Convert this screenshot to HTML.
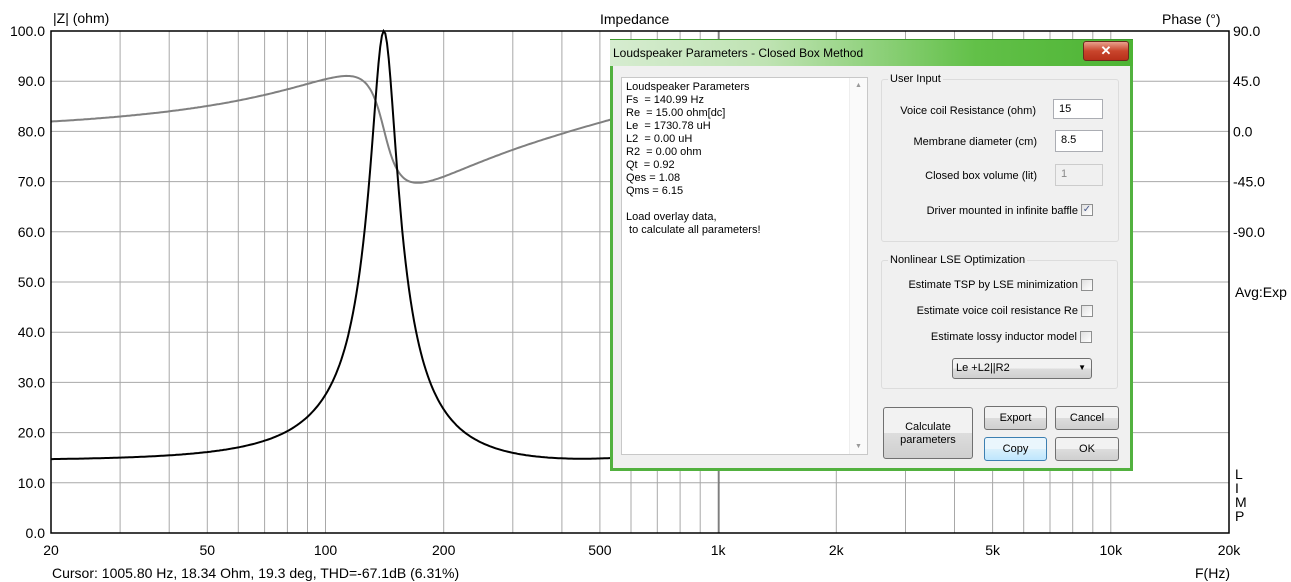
<!DOCTYPE html>
<html><head><meta charset="utf-8"><style>
body{margin:0;width:1291px;height:582px;background:#fff;position:relative;overflow:hidden;font-family:"Liberation Sans",Arial,sans-serif}
.t{position:absolute;font-size:14px;color:#000;white-space:nowrap;line-height:16px}
.dlg{position:absolute;left:610px;top:39px;width:517px;height:429px;border:3px solid #52b13f;border-top:none;background:#f0f0f0;font-size:11px}
.tb{position:absolute;left:610px;top:39px;width:523px;height:26px;background:linear-gradient(90deg,#d6ecd0 0%,#bfe3b3 30%,#62c048 70%,#4db434 100%);border-top:1px solid #3e9a2e}
.tb span{position:absolute;left:3px;top:6px;font-size:12px;color:#000}
.close{position:absolute;left:1083px;top:41px;width:44px;height:18px;border:1px solid #6b2a1e;border-radius:3px;background:linear-gradient(#e8a08c,#c9452c 50%,#b8301a);color:#fff;font-weight:bold;font-size:13px;text-align:center;line-height:18px}
.ta{position:absolute;left:621px;top:77px;width:247px;height:378px;background:#fff;border:1px solid #c8c8c8;box-sizing:border-box}
.ta pre{margin:0;position:absolute;left:4px;top:3px;font-family:"Liberation Sans",sans-serif;font-size:11px;line-height:13px}
.sb{position:absolute;right:0;top:0;width:17px;height:100%;background:#fafafa;border-left:1px solid #eee}
.grp{position:absolute;border:1px solid #dcdcdc;border-radius:3px;box-sizing:border-box}
.gl{position:absolute;background:#f0f0f0;padding:0 2px;font-size:11px;top:-7px;left:6px}
.l{position:absolute;font-size:11px;white-space:nowrap;text-align:right}
.in{position:absolute;background:#fff;border:1px solid #abadb3;box-sizing:border-box;font-size:11px;padding:3px 0 0 5px}
.cb{position:absolute;width:12px;height:12px;border:1px solid #8e8f8f;background:linear-gradient(135deg,#e0e0e0,#fff);box-sizing:border-box}
.btn{position:absolute;border:1px solid #707070;border-radius:3px;box-sizing:border-box;background:linear-gradient(#f2f2f2 50%,#dddddd 50%,#cfcfcf);font-size:11px;text-align:center}
</style></head><body>
<svg id="plot" width="1291" height="582" style="position:absolute;left:0;top:0"></svg>
<div class="t" style="left:53px;top:10px">|Z| (ohm)</div>
<div class="t" style="left:600px;top:11px">Impedance</div>
<div class="t" style="left:1162px;top:11px">Phase (°)</div>
<div class="t" style="left:1235px;top:284px">Avg:Exp</div>
<div class="t" style="left:1235px;top:467px;line-height:14px">L<br>I<br>M<br>P</div>
<div class="t" style="left:1195px;top:565px">F(Hz)</div>
<div class="t" style="left:52px;top:565px">Cursor: 1005.80 Hz, 18.34 Ohm, 19.3 deg, THD=-67.1dB (6.31%)</div>

<div class="dlg"></div>
<div class="tb"><span>Loudspeaker Parameters - Closed Box Method</span></div>
<div class="close">✕</div>
<div class="ta"><pre>Loudspeaker Parameters
Fs  = 140.99 Hz
Re  = 15.00 ohm[dc]
Le  = 1730.78 uH
L2  = 0.00 uH
R2  = 0.00 ohm
Qt  = 0.92
Qes = 1.08
Qms = 6.15

Load overlay data,
 to calculate all parameters!</pre><div class="sb"><span style="position:absolute;left:5px;top:4px;font-size:7px;color:#999">▲</span><span style="position:absolute;left:5px;bottom:4px;font-size:7px;color:#999">▼</span></div></div>

<div class="grp" style="left:881px;top:79px;width:238px;height:163px"><span class="gl">User Input</span></div>
<div class="l" style="right:255px;top:105px">Voice coil Resistance (ohm)</div>
<div class="in" style="left:1053px;top:99px;width:50px;height:20px">15</div>
<div class="l" style="right:254px;top:136px">Membrane diameter (cm)</div>
<div class="in" style="left:1055px;top:130px;width:48px;height:22px">8.5</div>
<div class="l" style="right:254px;top:170px">Closed box volume (lit)</div>
<div class="in" style="left:1055px;top:164px;width:48px;height:22px;background:#f0f0f0;color:#888;border-color:#ccc">1</div>
<div class="l" style="right:213px;top:205px">Driver mounted in infinite baffle</div>
<div class="cb" style="left:1081px;top:204px;color:#4a5a8a;font-size:10px;line-height:10px;text-align:center">✓</div>

<div class="grp" style="left:881px;top:260px;width:237px;height:129px"><span class="gl">Nonlinear LSE Optimization</span></div>
<div class="l" style="right:213px;top:279px">Estimate TSP by LSE minimization</div>
<div class="cb" style="left:1081px;top:279px"></div>
<div class="l" style="right:213px;top:305px">Estimate voice coil resistance Re</div>
<div class="cb" style="left:1081px;top:305px"></div>
<div class="l" style="right:214px;top:331px">Estimate lossy inductor model</div>
<div class="cb" style="left:1080px;top:331px"></div>
<div class="btn" style="left:952px;top:358px;width:140px;height:21px;text-align:left;padding:3px 0 0 3px">Le +L2||R2<span style="position:absolute;right:5px;top:4px;font-size:8px">▼</span></div>

<div class="btn" style="left:883px;top:407px;width:90px;height:52px;padding-top:13px;line-height:13px">Calculate<br>parameters</div>
<div class="btn" style="left:984px;top:406px;width:63px;height:24px;line-height:22px">Export</div>
<div class="btn" style="left:1055px;top:406px;width:64px;height:24px;line-height:22px">Cancel</div>
<div class="btn" style="left:984px;top:437px;width:63px;height:24px;line-height:22px;border-color:#3c7fb1;background:linear-gradient(#eaf6fd 50%,#d9f0fc 50%,#bee6fd)">Copy</div>
<div class="btn" style="left:1055px;top:437px;width:64px;height:24px;line-height:22px">OK</div>

<script>
var s=document.getElementById('plot'),h='';
var X0=51,X1=1229,Y0=31,Y1=533,W=X1-X0,H=Y1-Y0;
function fx(f){return X0+W*Math.log10(f/20)/3}
var grid=[];
for(var d=10;d<=10000;d*=10)for(var m=1;m<10;m++){var f=d*m;if(f>20&&f<20000)grid.push(f)}
grid.forEach(function(f){var x=fx(f).toFixed(1);h+='<line x1="'+x+'" y1="'+Y0+'" x2="'+x+'" y2="'+Y1+'" stroke="#a8a8a8"/>'});
for(var i=1;i<10;i++){var y=(Y0+H*i/10).toFixed(1);h+='<line x1="'+X0+'" y1="'+y+'" x2="'+X1+'" y2="'+y+'" stroke="#a8a8a8"/>'}
h+='<line x1="719" y1="'+Y0+'" x2="719" y2="'+Y1+'" stroke="#555"/>';
var Re=14.5,Rm=85.5,Q=6.15,fs=141,Le=0.0020,pm='',pp='';
for(var f=20;f<=700;f*=1.01){var x=f/fs,A=Q*(x-1/x),den=1+A*A,re=Re+Rm/den,im=-Rm*A/den+2*Math.PI*f*Le;
var z=Math.sqrt(re*re+im*im),ph=Math.atan2(im,re)*180/Math.PI;
var px=fx(f).toFixed(1),y1=(Y1-H*Math.min(z,100)/100).toFixed(1),y2=(Y0+(H/10)*(90-ph)/45).toFixed(1);
pm+=(pm?'L':'M')+px+' '+y1;pp+=(pp?'L':'M')+px+' '+y2;}
h+='<path d="'+pp+'" fill="none" stroke="#808080" stroke-width="2"/>';
h+='<path d="'+pm+'" fill="none" stroke="#000" stroke-width="2"/>';
h+='<rect x="'+X0+'" y="'+Y0+'" width="'+W+'" height="'+H+'" fill="none" stroke="#000" stroke-width="1.5"/>';
var st='font-family="Liberation Sans,Arial,sans-serif" font-size="14"';
for(var i=0;i<=10;i++){var y=Y1-H*i/10+5;h+='<text x="45" y="'+y.toFixed(1)+'" text-anchor="end" '+st+'>'+(i*10)+'.0</text>'}
var ph=['90.0','45.0','0.0','-45.0','-90.0'];
for(var i=0;i<5;i++){h+='<text x="1233" y="'+(Y0+H*i/10+5).toFixed(1)+'" '+st+'>'+ph[i]+'</text>'}
[[20,'20'],[50,'50'],[100,'100'],[200,'200'],[500,'500'],[1000,'1k'],[2000,'2k'],[5000,'5k'],[10000,'10k'],[20000,'20k']].forEach(function(a){h+='<text x="'+fx(a[0]).toFixed(1)+'" y="555" text-anchor="middle" '+st+'>'+a[1]+'</text>'});
s.innerHTML=h;
</script>
</body></html>
